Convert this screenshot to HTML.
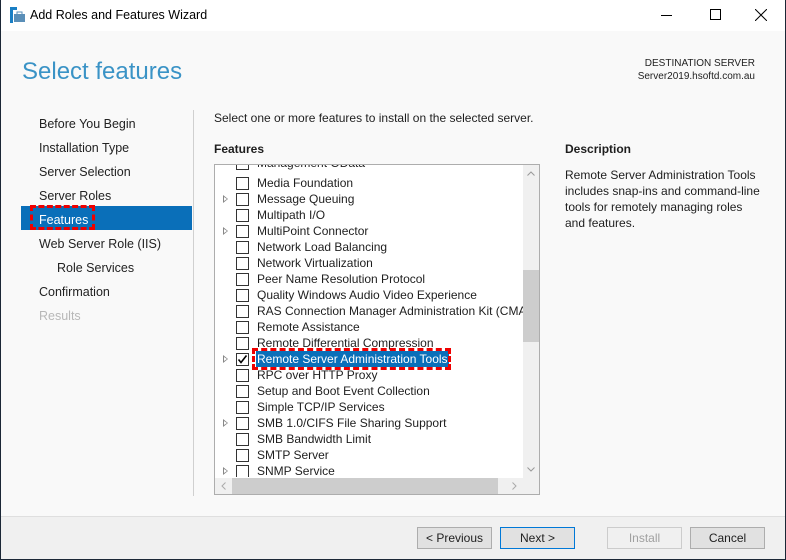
<!DOCTYPE html>
<html><head><meta charset="utf-8"><style>
*{margin:0;padding:0;box-sizing:border-box}
body{width:786px;height:560px;overflow:hidden;background:#1b2736;font-family:"Segoe UI","Liberation Sans",sans-serif;font-size:12px;color:#1e1e1e;position:relative}
.win{position:absolute;left:1px;top:0;width:784px;height:559px;background:#f9f9f9}
.a{position:absolute;white-space:nowrap}
.title{left:0;top:0;width:784px;height:31px;background:#fff}
.nav{left:38px;font-size:12.5px;color:#222}
.row{position:absolute;left:0;height:16px;line-height:16px;width:320px;white-space:nowrap}
.cb{position:absolute;left:21px;top:2px;width:13px;height:13px;border:1px solid #333;background:#fff}
.tx{position:absolute;left:42px;top:0}
.ex{position:absolute;left:8px;top:4px;width:0;height:0;border-left:5px solid #888;border-top:4px solid transparent;border-bottom:4px solid transparent}
.ex:after{content:"";position:absolute;left:-4px;top:-2px;border-left:3px solid #fff;border-top:2px solid transparent;border-bottom:2px solid transparent}
.btn{position:absolute;top:527px;width:75px;height:22px;border:1px solid #adadad;background:#e1e1e1;text-align:center;line-height:20px;font-size:12px}
</style></head><body><div class="win">
<div class="a title"></div>
<svg class="a" style="left:9px;top:7px" width="16" height="16"><rect x="0" y="0" width="3" height="16" fill="#1a7fc4"/><rect x="0" y="0" width="7" height="3" fill="#1a7fc4"/><rect x="4" y="7" width="11" height="8" fill="#5a8fb8"/><rect x="7" y="5" width="5" height="3" fill="none" stroke="#5a8fb8"/></svg>
<div class="a" style="left:29px;top:8px;font-size:12.5px;color:#000">Add Roles and Features Wizard</div>
<div class="a" style="left:660px;top:15px;width:11px;height:1px;background:#000"></div>
<div class="a" style="left:709px;top:9px;width:11px;height:11px;border:1px solid #000"></div>
<svg class="a" style="left:754px;top:9px" width="12" height="12"><path d="M0 0L12 12M12 0L0 12" stroke="#000" stroke-width="1"/></svg>
<div class="a" style="left:21px;top:58px;font-size:24px;color:#3a93c6;font-weight:300">Select features</div>
<div class="a" style="right:30px;top:57px;font-size:10px;text-align:right;line-height:13px;color:#222">DESTINATION SERVER<br>Server2019.hsoftd.com.au</div>
<div class="a nav" style="top:117px">Before You Begin</div>
<div class="a nav" style="top:141px">Installation Type</div>
<div class="a nav" style="top:165px">Server Selection</div>
<div class="a nav" style="top:189px">Server Roles</div>
<div class="a" style="left:20px;top:206px;width:171px;height:24px;background:#0a6fb9"></div>
<div class="a nav" style="top:213px;color:#fff">Features</div>
<div class="a" style="left:29px;top:205px;width:65px;height:25px;border:3px dashed #e00"></div>
<div class="a nav" style="top:237px">Web Server Role (IIS)</div>
<div class="a nav" style="left:56px;top:261px">Role Services</div>
<div class="a nav" style="top:285px">Confirmation</div>
<div class="a nav" style="top:309px;color:#b8b8b8">Results</div>
<div class="a" style="left:192px;top:110px;width:1px;height:386px;background:#d0d0d0"></div>
<div class="a" style="left:213px;top:111px;font-size:12px">Select one or more features to install on the selected server.</div>
<div class="a" style="left:213px;top:142px;font-weight:bold">Features</div>
<div class="a" style="left:564px;top:142px;font-weight:bold">Description</div>
<div class="a" style="left:564px;top:167px;line-height:16px;white-space:normal;width:200px">Remote Server Administration Tools includes snap-ins and command-line tools for remotely managing roles and features.</div>
<div class="a" style="left:213px;top:164px;width:326px;height:331px;border:1px solid #adadad;background:#fff;overflow:hidden">
 <div class="a" style="left:0;top:0;width:308px;height:312px;overflow:hidden">
  <div class="row" style="top:-10px"><div class="cb"></div><div class="tx">Management OData</div></div>
  <div class="row" style="top:10px"><div class="cb"></div><div class="tx">Media Foundation</div></div>
  <div class="row" style="top:26px"><div class="ex"></div><div class="cb"></div><div class="tx">Message Queuing</div></div>
  <div class="row" style="top:42px"><div class="cb"></div><div class="tx">Multipath I/O</div></div>
  <div class="row" style="top:58px"><div class="ex"></div><div class="cb"></div><div class="tx">MultiPoint Connector</div></div>
  <div class="row" style="top:74px"><div class="cb"></div><div class="tx">Network Load Balancing</div></div>
  <div class="row" style="top:90px"><div class="cb"></div><div class="tx">Network Virtualization</div></div>
  <div class="row" style="top:106px"><div class="cb"></div><div class="tx">Peer Name Resolution Protocol</div></div>
  <div class="row" style="top:122px"><div class="cb"></div><div class="tx">Quality Windows Audio Video Experience</div></div>
  <div class="row" style="top:138px"><div class="cb"></div><div class="tx">RAS Connection Manager Administration Kit (CMAK)</div></div>
  <div class="row" style="top:154px"><div class="cb"></div><div class="tx">Remote Assistance</div></div>
  <div class="row" style="top:170px"><div class="cb"></div><div class="tx">Remote Differential Compression</div></div>
  <div class="row" style="top:186px"><div class="ex"></div><div class="cb" style="border-color:#333"><svg width="11" height="11" style="position:absolute;left:0;top:0"><path d="M1.5 5.5L4 8.5L9.5 1.5" stroke="#000" stroke-width="1.6" fill="none"/></svg></div><div class="tx" style="background:#0a6fb9;color:#fff;padding:0 1px;left:41px">Remote Server Administration Tools</div></div>
  <div class="row" style="top:202px"><div class="cb"></div><div class="tx">RPC over HTTP Proxy</div></div>
  <div class="row" style="top:218px"><div class="cb"></div><div class="tx">Setup and Boot Event Collection</div></div>
  <div class="row" style="top:234px"><div class="cb"></div><div class="tx">Simple TCP/IP Services</div></div>
  <div class="row" style="top:250px"><div class="ex"></div><div class="cb"></div><div class="tx">SMB 1.0/CIFS File Sharing Support</div></div>
  <div class="row" style="top:266px"><div class="cb"></div><div class="tx">SMB Bandwidth Limit</div></div>
  <div class="row" style="top:282px"><div class="cb"></div><div class="tx">SMTP Server</div></div>
  <div class="row" style="top:298px"><div class="ex"></div><div class="cb"></div><div class="tx">SNMP Service</div></div>
 </div>
 <div class="a" style="left:37px;top:183px;height:22px;border:3px dashed #e00;width:199px"></div>
 <div class="a" style="left:308px;top:0;width:16px;height:313px;background:#f0f0f0"></div>
 <div class="a" style="left:308px;top:105px;width:16px;height:72px;background:#cdcdcd"></div>
 <svg class="a" style="left:312px;top:6px" width="8" height="5"><path d="M0.5 4.5L4 1L7.5 4.5" stroke="#999" fill="none"/></svg>
 <svg class="a" style="left:312px;top:302px" width="8" height="5"><path d="M0.5 0.5L4 4L7.5 0.5" stroke="#999" fill="none"/></svg>
 <div class="a" style="left:0;top:313px;width:308px;height:16px;background:#f0f0f0"></div>
 <div class="a" style="left:17px;top:313px;width:266px;height:16px;background:#cdcdcd"></div>
 <svg class="a" style="left:6px;top:317px" width="5" height="8"><path d="M4.5 0.5L1 4L4.5 7.5" stroke="#aaa" fill="none"/></svg>
 <svg class="a" style="left:297px;top:317px" width="5" height="8"><path d="M0.5 0.5L4 4L0.5 7.5" stroke="#aaa" fill="none"/></svg>
 <div class="a" style="left:308px;top:313px;width:16px;height:16px;background:#f0f0f0"></div>
</div>
<div class="a" style="left:0;top:516px;width:784px;height:43px;background:#f0f0f0;border-top:1px solid #dfdfdf"></div>
<div class="btn" style="left:416px">&lt; Previous</div>
<div class="btn" style="left:499px;border-color:#0078d7">Next &gt;</div>
<div class="btn" style="left:606px;background:#f0f0f0;border-color:#ccc;color:#a0a0a0">Install</div>
<div class="btn" style="left:689px">Cancel</div>
</div></body></html>
